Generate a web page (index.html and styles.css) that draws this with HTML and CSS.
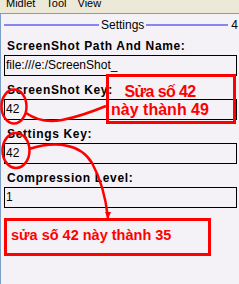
FILE: index.html
```html
<!DOCTYPE html>
<html>
<head>
<meta charset="utf-8">
<link rel="stylesheet" href="styles.css">
</head>
<body>
<div class="menubar">
  <span class="menu-item">Midlet</span>
  <span class="menu-item">Tool</span>
  <span class="menu-item">View</span>
</div>
<div class="screen">
  <div class="title-row">
    <div class="rule rule-left"></div>
    <span class="title">Settings</span>
    <div class="rule rule-right"></div>
    <span class="page-num">4</span>
  </div>
  <div class="form">
    <div class="label">ScreenShot Path And Name:</div>
    <div class="field">file:///e:/ScreenShot_</div>
    <div class="label">ScreenShot Key:</div>
    <div class="field">42</div>
    <div class="label">Settings Key:</div>
    <div class="field">42</div>
    <div class="label">Compression Level:</div>
    <div class="field">1</div>
  </div>
</div>
<div class="annotations">
  <svg class="marks" width="239" height="284" viewBox="0 0 239 284">
    <ellipse cx="14" cy="106.5" rx="12.5" ry="17" fill="none" stroke="#ff0000" stroke-width="2.5"/>
    <ellipse cx="16" cy="150.5" rx="13.5" ry="17.5" fill="none" stroke="#ff0000" stroke-width="2.5"/>
    <path d="M26,113 Q42,124 62,120 T106,106" fill="none" stroke="#ff0000" stroke-width="2.5"/>
    <path d="M29,149 C55,141 80,143 92,163 C102,181 106,200 108,218" fill="none" stroke="#ff0000" stroke-width="2.5"/>
    <path d="M105,212 L108,219 L111,212 Z" fill="#ff0000"/>
  </svg>
  <div class="note note-one">
    <div class="note-line-tight">Sửa số 42</div>
    <div>này thành 49</div>
  </div>
  <div class="note note-two">sửa số 42 này thành 35</div>
</div>
</body>
</html>
```
FILE: styles.css
```css
html, body {
  margin: 0;
  padding: 0;
}
body {
  width: 239px;
  height: 284px;
  overflow: hidden;
  position: relative;
  background: #f4f2f7;
  font-family: "Liberation Sans", Arial, sans-serif;
  color: #000;
}
.menubar {
  height: 13px;
  background: #ece9d8;
  border-bottom: 1px solid #7f9db9;
  overflow: hidden;
  display: flex;
  padding-left: 6px;
  gap: 11px;
}
.menu-item {
  font-size: 11px;
  line-height: 13px;
  margin-top: -3px;
}
.screen {
  border-left: 1px solid #7a9ec6;
  height: 270px;
}
.title-row {
  display: flex;
  align-items: center;
  height: 22px;
  padding-left: 3px;
  white-space: nowrap;
  overflow: hidden;
}
.rule {
  height: 2px;
  background: #8884f0;
  flex: none;
}
.rule-left {
  width: 95px;
}
.title {
  font-size: 12px;
  margin: 0 2px;
}
.rule-right {
  width: 82px;
}
.page-num {
  font-size: 12px;
  margin-left: 3px;
}
.form {
  padding: 3px 0 0 3px;
}
.label {
  font-size: 12px;
  font-weight: bold;
  line-height: 14px;
  height: 14px;
  padding-left: 3px;
  margin-bottom: 2px;
  letter-spacing: 0.65px;
  white-space: nowrap;
}
.field {
  box-sizing: border-box;
  width: 233px;
  height: 21px;
  border: 1px solid #000;
  font-size: 12px;
  line-height: 19px;
  padding-left: 1px;
  margin-bottom: 7px;
  white-space: nowrap;
  overflow: hidden;
}
.annotations {
  position: absolute;
  left: 0;
  top: 0;
  width: 239px;
  height: 284px;
  pointer-events: none;
}
.marks {
  position: absolute;
  left: 0;
  top: 0;
}
.note {
  position: absolute;
  box-sizing: border-box;
  border: 3px solid #ff0000;
  color: #ff0000;
  font-family: "Liberation Sans", Roboto, sans-serif;
  font-weight: bold;
  font-size: 16px;
  line-height: 18px;
  white-space: nowrap;
}
.note-one {
  left: 106px;
  top: 74px;
  width: 130px;
  height: 50px;
  padding: 6px 22px 0 0;
  text-align: center;
}
.note-line-tight {
  letter-spacing: -0.6px;
}
.note-two {
  left: 4px;
  top: 218px;
  width: 207px;
  height: 38px;
  padding: 5px 0 0 4px;
  font-size: 14.5px;
}
```
